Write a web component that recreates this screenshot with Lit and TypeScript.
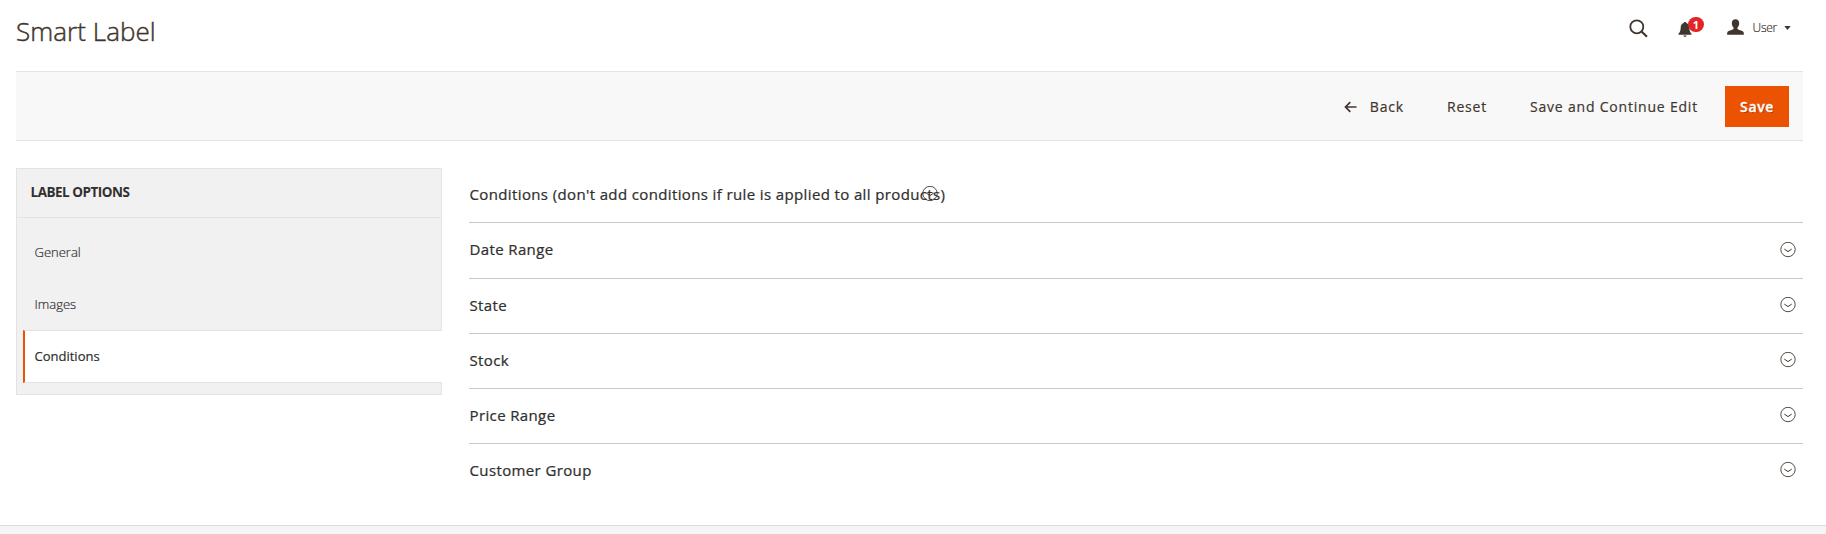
import { LitElement, html, css } from "lit";
import { customElement, property } from "lit/decorators.js";
import { classMap } from "lit/directives/class-map.js";

@customElement("toggle-icon")
class ToggleIcon extends LitElement {
  static styles = css`
    :host { display: block; width: 16px; height: 16px; }
    svg { display: block; }
  `;
  render() {
    return html`<svg width="16" height="16" viewBox="0 0 16 16" fill="none" stroke="#41362f">
      <circle cx="8" cy="7.5" r="7.2" stroke-width="0.9" />
      <path d="M4.300 7.100 8 9.600l3.700-2.500" stroke-width="1" />
    </svg>`;
  }
}

@customElement("page-header")
class PageHeader extends LitElement {
  static styles = css`
    :host { display: flex; justify-content: space-between; height: 71px; padding: 0 35px 0 16px; box-sizing: border-box; color: #41362f; }
    h1 { margin: 13px 0 0; font-size: 26px; line-height: 36px; font-weight: 300; letter-spacing: 0.05px; -webkit-text-stroke: 0.45px #41362f; }
    .tools { display: flex; align-items: flex-start; }
    svg { display: block; }
    .search { margin: 19px 30px 0 0; }
    .bell { position: relative; margin: 21px 35px 0 0; }
    .badge { position: absolute; left: 10px; top: -4px; width: 16px; height: 15px; border-radius: 8px; background: #e22626; color: #fff; font-size: 11px; line-height: 15px; font-weight: 700; text-align: center; }
    .user { margin-top: 19px; }
    .name { width: 24.5px; margin: 19px 0 0 8.5px; font-size: 12px; line-height: 17px; font-weight: 300; letter-spacing: -0.25px; white-space: nowrap; -webkit-text-stroke: 0.2px #41362f; }
    .caret { margin: 26px 0 0 7px; }
  `;
  render() {
    return html`
      <h1>Smart Label</h1>
      <div class="tools">
        <svg class="search" width="19" height="19" viewBox="0 0 19 19" fill="none" stroke="#41362f">
          <circle cx="7.8" cy="7.8" r="6.5" stroke-width="1.8" />
          <path d="m12.5 12.5 5.5 5.3" stroke-width="2.2" />
        </svg>
        <div class="bell">
          <svg width="14" height="17" viewBox="0 0 14 17" fill="#41362f">
            <path d="M7 1c.8 0 1.3.5 1.4 1.1 2 .7 2.8 2.3 2.9 4.4.1 3 .6 4.6 2.2 6.2v1.1H.5v-1.1c1.600-1.600 2.100-3.200 2.200-6.200.1-2.100.9-3.700 2.900-4.400C5.700 1.500 6.200 1 7 1zM5.400 14.500h3.200c-.2.900-.8 1.400-1.600 1.400s-1.400-.5-1.600-1.400z" />
          </svg>
          <span class="badge">1</span>
        </div>
        <svg class="user" width="17" height="16" viewBox="0 0 17 16" fill="#41362f">
          <path d="M8.500.3c2.300 0 3.700 1.400 3.700 3.800 0 1.900-.8 3.600-1.700 4.500v1.500c.8 1 5.800 1.500 6.200 3.500.1.500.2 1.400.2 2.100H.1c0-.7.1-1.600.2-2.100.4-2 5.400-2.500 6.200-3.500V8.600C5.600 7.700 4.800 6 4.800 4.100 4.800 1.700 6.200.3 8.500.3z" />
        </svg>
        <span class="name">User</span>
        <svg class="caret" width="7" height="4" viewBox="0 0 7 4" fill="#41362f"><path d="M.3 0h6.400L3.500 4z" /></svg>
      </div>
    `;
  }
}

@customElement("action-bar")
class ActionBar extends LitElement {
  static styles = css`
    :host { display: flex; align-items: center; justify-content: flex-end; height: 70px; margin: 0 23px 0 16px; padding-right: 14px; box-sizing: border-box; background: #f8f8f8; border: solid #e3e3e3; border-width: 1px 0; }
    button { display: flex; align-items: center; height: 41px; padding: 2px 0 0; box-sizing: border-box; border: 0; background: none; font: 400 14px/20px "Open Sans", sans-serif; letter-spacing: 0.8px; color: #41362f; white-space: nowrap; -webkit-text-stroke: 0.2px #41362f; }
    .back { margin-right: 43px; }
    .back svg { margin-right: 12.5px; }
    .reset { margin-right: 43px; }
    .continue { margin-right: 27px; }
    .save { width: 64px; justify-content: center; background: #eb5202; color: #fff; font-weight: 600; letter-spacing: 0.6px; text-shadow: 1px 1px 0 rgba(0, 0, 0, 0.25); -webkit-text-stroke: 0.3px #fff; }
  `;
  render() {
    return html`
      <button class="back">
        <svg width="13" height="12" viewBox="0 0 13 12" fill="none" stroke="#41362f" stroke-width="1.7"><path d="M12.500 6H1.500M6.300 1.200 1.500 6l4.800 4.800" /></svg>Back
      </button>
      <button class="reset">Reset</button>
      <button class="continue">Save and Continue Edit</button>
      <button class="save">Save</button>
    `;
  }
}

@customElement("side-tabs")
class SideTabs extends LitElement {
  static styles = css`
    :host { display: block; width: 426px; height: 227px; box-sizing: border-box; background: #f1f1f1; border: 1px solid #e3e3e3; color: #303030; }
    .title { height: 48px; padding-left: 13.5px; border-bottom: 1px solid #e3e3e3; font-size: 13.500px; line-height: 46px; font-weight: 700; letter-spacing: -0.5px; }
    .tabs { padding: 8px 0 0 6px; }
    .tab { height: 52px; padding-left: 11.5px; font-size: 13px; line-height: 52px; font-weight: 300; -webkit-text-stroke: 0.2px #303030; }
    .active { height: 51px; margin-right: -1px; padding-left: 9.5px; background: #fff; border: solid #e3e3e3; border-width: 1px 0; border-left: 2px solid #eb5202; line-height: 51px; font-weight: 400; }
  `;
  tabs = ["General", "Images", "Conditions"];
  render() {
    return html`
      <div class="title">LABEL OPTIONS</div>
      <div class="tabs">
        ${this.tabs.map((t) => html`<div class=${classMap({ tab: true, active: t === "Conditions" })}>${t}</div>`)}
      </div>
    `;
  }
}

@customElement("fieldset-row")
class FieldsetRow extends LitElement {
  @property() label = "";
  static styles = css`
    :host { display: flex; justify-content: space-between; height: 55px; box-sizing: border-box; border-bottom: 1px solid #c8c8c8; color: #303030; }
    .label { padding: 16px 0 0 0.5px; font-size: 15px; line-height: 20px; letter-spacing: 0.375px; white-space: nowrap; -webkit-text-stroke: 0.24px #303030; }
    toggle-icon { margin: 18px 7px 0 0; }
    :host(.inline) { justify-content: flex-start; }
    :host(.inline) toggle-icon { margin: 18px 0 0 -23.5px; }
    :host(.tall) { height: 56px; }
    :host(.tall) toggle-icon { margin-top: 19px; }
    :host(.last) { border-bottom: 0; }
  `;
  render() {
    return html`<span class="label">${this.label}</span><toggle-icon></toggle-icon>`;
  }
}

@customElement("app-root")
class AppRoot extends LitElement {
  static styles = css`
    :host { display: flex; flex-direction: column; height: 534px; overflow: hidden; background: #fff; font-family: "Open Sans", sans-serif; color: #41362f; }
    .body { display: flex; gap: 27px; height: 384px; padding: 27px 23px 0 16px; box-sizing: border-box; }
    .sections { flex: 1; }
    .footer { flex: 1; background: #f5f5f5; border-top: 1px solid #ddd; }
  `;
  render() {
    return html`
      <page-header></page-header>
      <action-bar></action-bar>
      <div class="body">
        <side-tabs></side-tabs>
        <div class="sections">
          <fieldset-row class="inline" label="Conditions (don't add conditions if rule is applied to all products)"></fieldset-row>
          <fieldset-row class="tall" label="Date Range"></fieldset-row>
          <fieldset-row label="State"></fieldset-row>
          <fieldset-row label="Stock"></fieldset-row>
          <fieldset-row label="Price Range"></fieldset-row>
          <fieldset-row class="last" label="Customer Group"></fieldset-row>
        </div>
      </div>
      <div class="footer"></div>
    `;
  }
}
